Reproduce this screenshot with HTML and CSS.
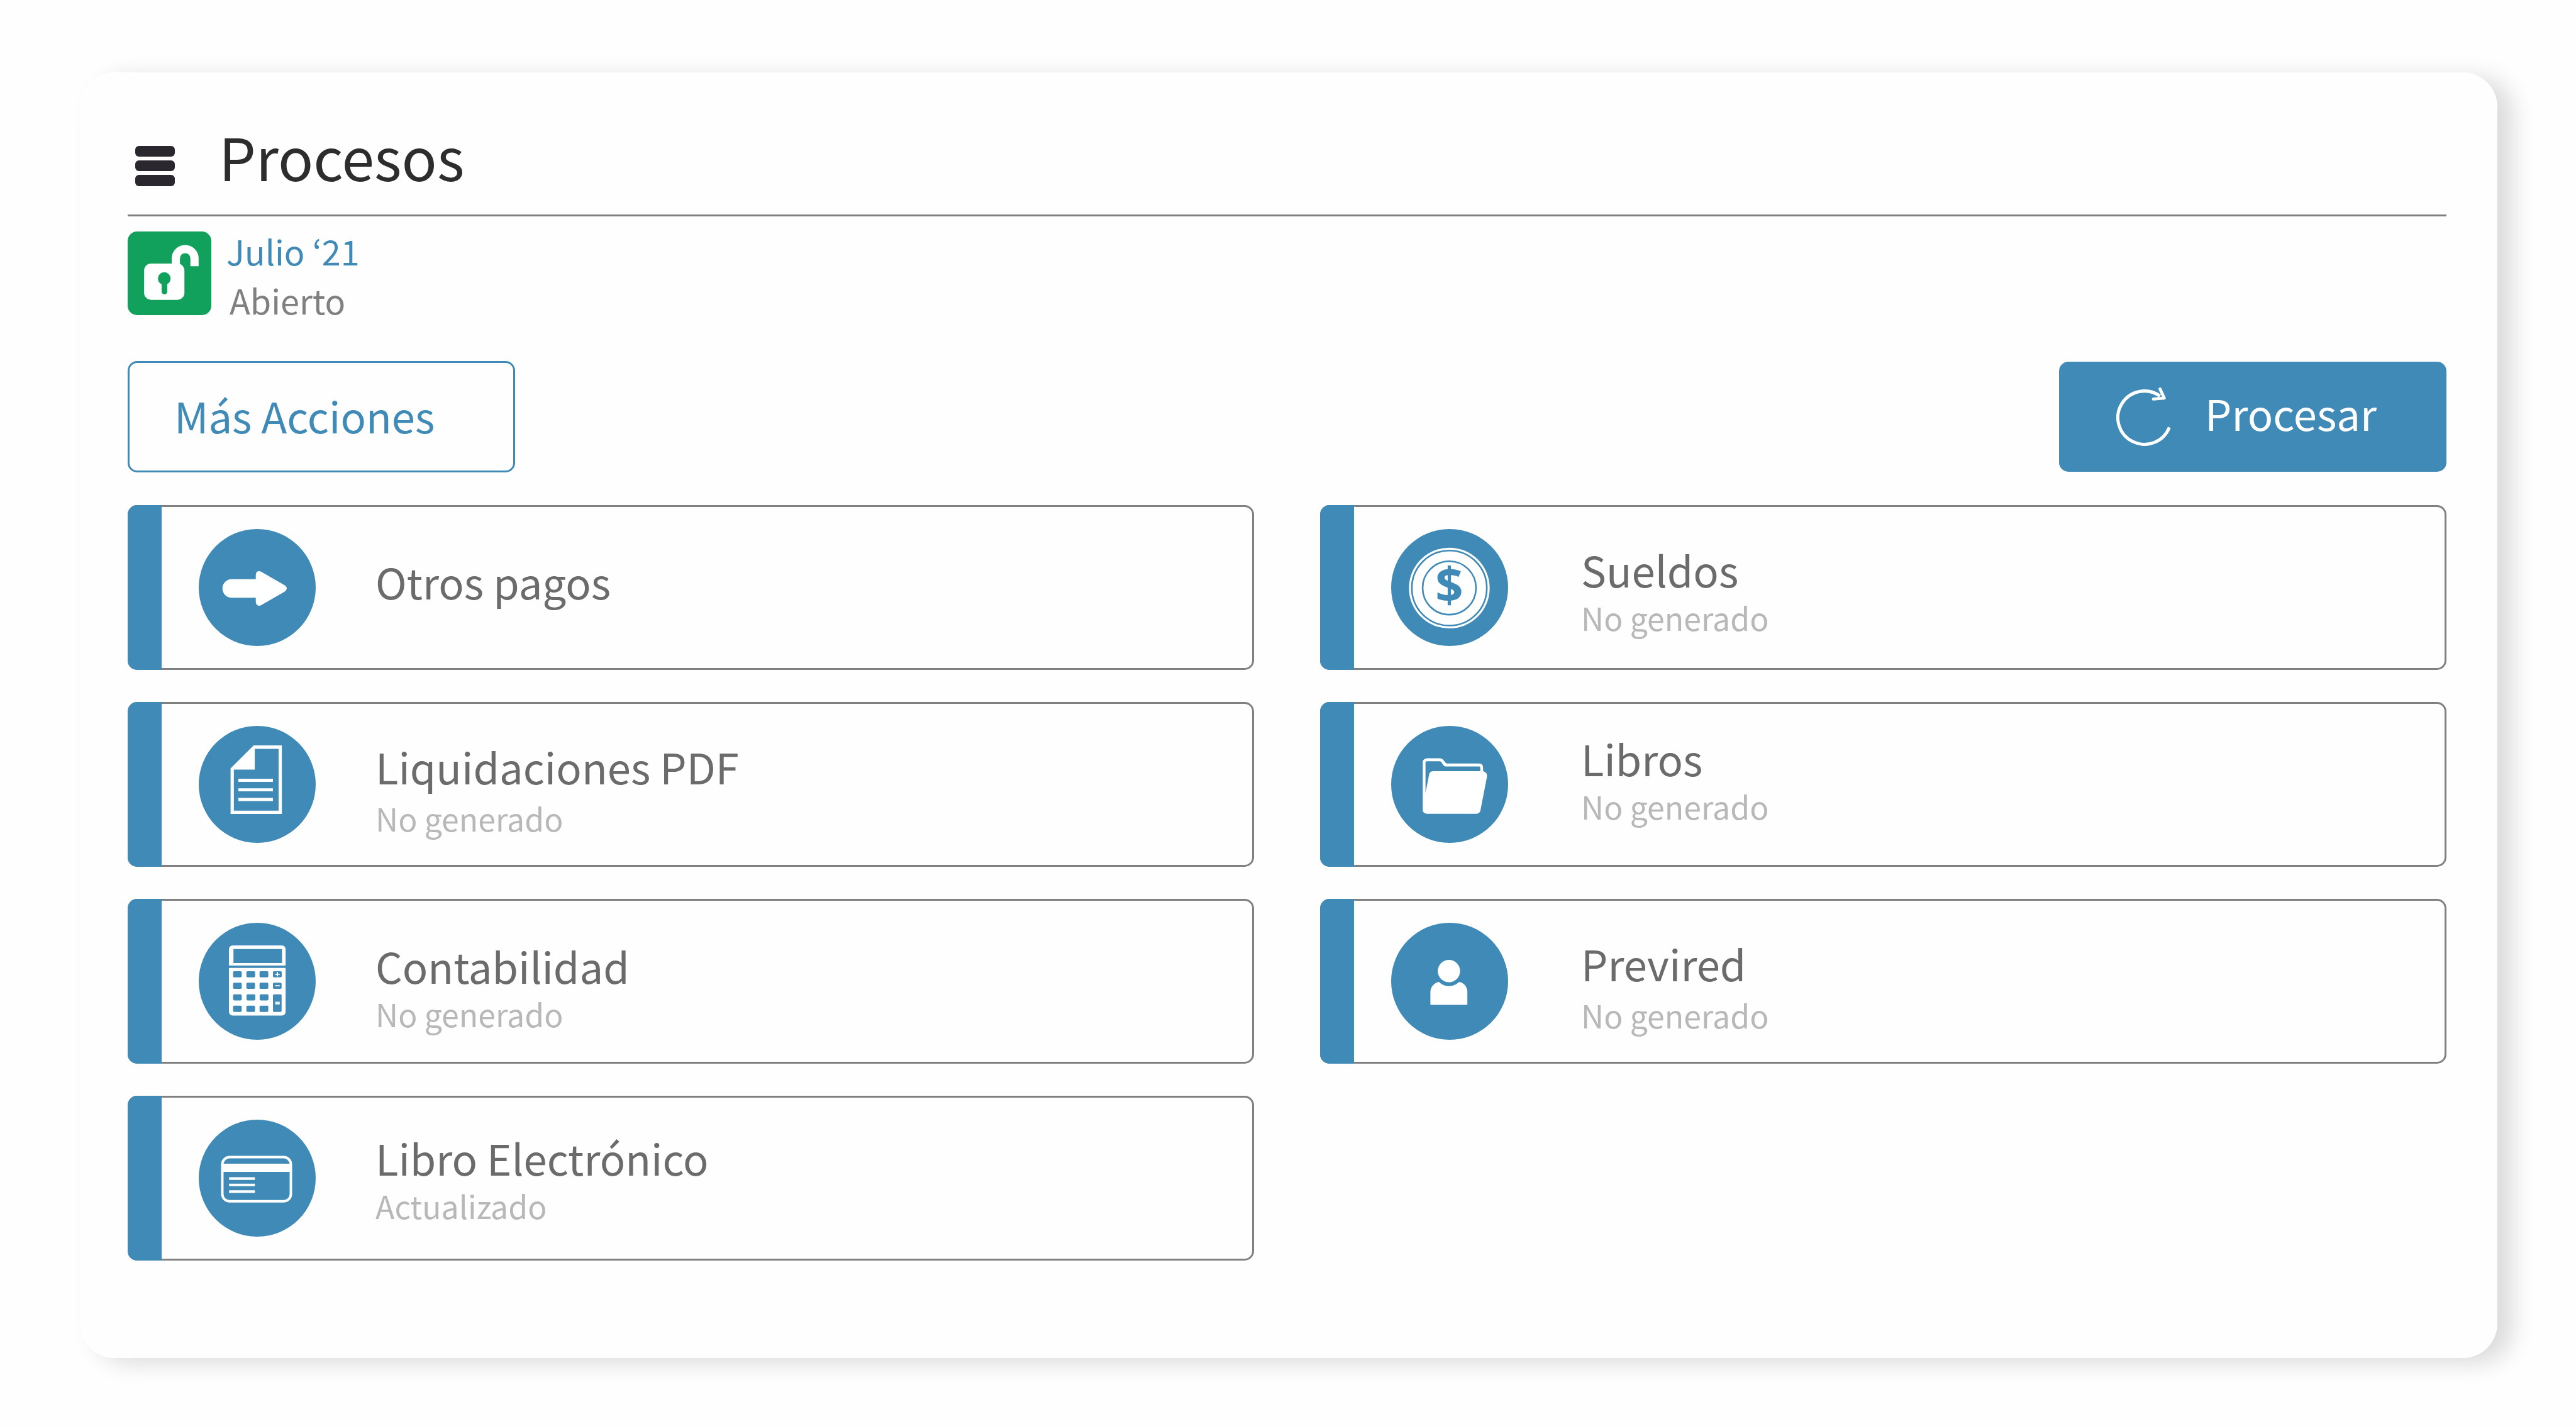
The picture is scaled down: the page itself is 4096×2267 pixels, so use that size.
FILE: index.html
```html
<!DOCTYPE html>
<html lang="es">
<head>
<meta charset="utf-8">
<title>Procesos</title>
<meta name="viewport" content="width=device-width, initial-scale=1">
<link rel="stylesheet" href="styles.css">
</head>
<body>
<main class="panel">
  <header class="panel-header">
    <svg class="menu-icon" viewBox="0 0 63 64" aria-hidden="true">
      <rect width="63" height="17" rx="6"/>
      <rect y="23" width="63" height="17" rx="6"/>
      <rect y="46" width="63" height="18" rx="6"/>
    </svg>
    <h1 class="title">Procesos</h1>
  </header>

  <section class="period">
    <svg class="lock" viewBox="0 0 222 224" aria-hidden="true">
      <path d="M128 100V72a25 25 0 0 1 50 0V93" fill="none" stroke="#fff" stroke-width="22"/>
      <rect x="43" y="86" width="108" height="97" rx="19" fill="#fff"/>
      <circle cx="97" cy="126" r="17" fill="#11a15c"/>
      <path d="M97.500 130V161" stroke="#11a15c" stroke-width="15" stroke-linecap="round"/>
    </svg>
    <div class="period-text">
      <p class="period-name">Julio ‘21</p>
      <p class="period-state">Abierto</p>
    </div>
  </section>

  <div class="actions">
    <button class="button button-outline" type="button">Más Acciones</button>
    <button class="button button-solid" type="button">
      <svg class="refresh" viewBox="0 0 146 157" aria-hidden="true">
        <path d="M142 107A71.500 71.500 0 1 1 117 23" stroke-width="8.500"/>
        <path d="M117 4L128.500 28.500L99 31" stroke-width="8" stroke-linecap="round" stroke-linejoin="round"/>
      </svg>
      <span class="button-label">Procesar</span>
    </button>
  </div>

  <ul class="cards">
    <li class="card">
      <span class="stripe"></span>
      <svg class="icon" viewBox="149 159 933 933" aria-hidden="true">
        <path d="M412 559H604V525Q606 495 630 495Q640 495 650 501L835 608Q851 618 851 633Q851 647 835 658L650 765Q640 771 630 771Q606 769 604 741V707H412A74 74 0 0 1 412 559Z"/>
      </svg>
      <div class="card-text single">
        <h2 class="card-title">Otros pagos</h2>
      </div>
    </li>
    <li class="card">
      <span class="stripe"></span>
      <svg class="icon" viewBox="153 159 933 933" aria-hidden="true">
        <circle cx="617" cy="630" r="322"/>
        <circle class="ring" cx="617" cy="630" r="299"/>
        <circle class="ring" cx="617" cy="629" r="213"/>
        <text class="coin" x="617" y="747">$</text>
      </svg>
      <div class="card-text low">
        <h2 class="card-title">Sueldos</h2>
        <p class="card-state">No generado</p>
      </div>
    </li>
    <li class="card">
      <span class="stripe"></span>
      <svg class="icon" viewBox="149 141 933 933" aria-hidden="true">
        <path fill-rule="evenodd" d="M403 480L587 297H812V843H403ZM429 490V817H786V324H596V490Z"/>
        <path d="M465 562H741V587H465ZM465 639H741V663H465ZM465 715H741V740H465Z"/>
      </svg>
      <div class="card-text low loose">
        <h2 class="card-title">Liquidaciones PDF</h2>
        <p class="card-state">No generado</p>
      </div>
    </li>
    <li class="card">
      <span class="stripe"></span>
      <svg class="icon" viewBox="153 141 933 933" aria-hidden="true">
        <path fill-rule="evenodd" d="M405 424Q413 402 438 399H540Q562 399 575 420Q586 439 596 441H855Q884 442 886 470L887 502Q905 506 917 525V548L866 812Q862 838 836 842H438Q415 840 405 822ZM427 432V675L456 528Q460 503 486 502H864V474Q864 464 855 464H588Q574 462 566 449L556 433Q550 424 540 423H436Q429 423 427 432Z"/>
      </svg>
      <div class="card-text high">
        <h2 class="card-title">Libros</h2>
        <p class="card-state">No generado</p>
      </div>
    </li>
    <li class="card">
      <span class="stripe"></span>
      <svg class="icon" viewBox="149 156 933 933" aria-hidden="true">
        <path fill-rule="evenodd" d="M390 497V366Q392 339 420 336H812Q840 339 842 366V497ZM426 366V477H813V366Z"/>
        <path d="M390 516H842V866Q840 893 812 896H420Q392 893 390 866Z"/>
        <g class="keys">
          <rect x="423" y="542" width="69" height="49" rx="9"/>
          <rect x="529" y="542" width="70" height="49" rx="9"/>
          <rect x="634" y="542" width="70" height="49" rx="9"/>
          <rect x="741" y="542" width="70" height="49" rx="9"/>
          <rect x="423" y="634" width="69" height="49" rx="9"/>
          <rect x="529" y="634" width="69" height="49" rx="9"/>
          <rect x="634" y="634" width="70" height="49" rx="9"/>
          <rect x="741" y="634" width="69" height="49" rx="9"/>
          <rect x="423" y="726" width="69" height="49" rx="9"/>
          <rect x="530" y="726" width="70" height="49" rx="9"/>
          <rect x="635" y="726" width="70" height="49" rx="9"/>
          <rect x="741" y="726" width="69" height="141" rx="9"/>
          <rect x="423" y="817" width="69" height="50" rx="9"/>
          <rect x="529" y="817" width="69" height="50" rx="9"/>
          <rect x="634" y="817" width="70" height="50" rx="9"/>
        </g>
        <path d="M759 562H772V549H781V562H795V571H781V584H772V571H759ZM759 654H795V663H759ZM759 786H795V795H759ZM759 798H795V807H759Z"/>
      </svg>
      <div class="card-text lowest">
        <h2 class="card-title">Contabilidad</h2>
        <p class="card-state">No generado</p>
      </div>
    </li>
    <li class="card">
      <span class="stripe"></span>
      <svg class="icon" viewBox="153 156 933 933" aria-hidden="true">
        <circle cx="614" cy="541" r="89"/>
        <path d="M534 628C495 636 466 668 466 710V806Q466 809 469 810H759Q761 809 761 806V706C761 668 735 636 695 628C672 650 645 661 614 661S556 650 534 628Z"/>
      </svg>
      <div class="card-text low loose">
        <h2 class="card-title">Previred</h2>
        <p class="card-state">No generado</p>
      </div>
    </li>
    <li class="card">
      <span class="stripe"></span>
      <svg class="icon" viewBox="149 141 933 933" aria-hidden="true">
        <rect x="337" y="440" width="547" height="352" rx="58" fill="none" stroke="#fff" stroke-width="20"/>
        <path d="M337 492H884V557H337ZM391 600H597V621H391ZM391 651H597V672H391ZM391 704H597V725H391Z"/>
      </svg>
      <div class="card-text">
        <h2 class="card-title">Libro Electrónico</h2>
        <p class="card-state">Actualizado</p>
      </div>
    </li>
  </ul>
</main>
</body>
</html>
```
FILE: styles.css
```css
* {
  box-sizing: border-box;
}

body {
  margin: 0;
  padding: 115px 125px 107px 127px;
  background: #fefefe;
  font-family: "Noto Sans CJK KR", "Noto Sans", sans-serif;
}

h1, h2, p, ul {
  margin: 0;
  padding: 0;
  font-weight: 400;
}

.panel {
  padding: 83px 81px 155px 76px;
  border-radius: 55px;
  background: #fefefe;
  box-shadow: 24px 8px 36px rgba(0, 0, 0, 0.14);
}

/* Heading */
.panel-header {
  display: flex;
  align-items: flex-end;
  gap: 70px;
  padding: 0 12px 43px;
  border-bottom: 3px solid #808080;
}

.menu-icon {
  width: 63px;
  height: 64px;
  margin-bottom: 2px;
  fill: #2a272f;
}

.title {
  font-size: 93px;
  line-height: 100px;
  color: #2d2d2d;
}

/* Current period */
.period {
  display: flex;
  align-items: flex-start;
  gap: 24px;
  margin-top: 16px;
}

.lock {
  width: 133px;
  height: 133px;
  margin-top: 8px;
  border-radius: 15px;
  background: #11a15c;
}

.period-text {
  font-size: 54px;
  line-height: 78px;
}

.period-name {
  color: #3f8ab7;
}

.period-state {
  padding-left: 5px;
  color: #808080;
}

/* Actions */
.actions {
  display: flex;
  align-items: center;
  justify-content: space-between;
  margin-top: 58px;
}

.button {
  display: flex;
  align-items: center;
  min-width: 616px;
  border-radius: 15px;
  font: inherit;
  font-size: 67px;
  line-height: 84px;
  cursor: pointer;
}

.button-outline {
  height: 177px;
  padding: 0 71px 5px;
  border: 3px solid #3f8ab7;
  background: transparent;
  color: #3f8ab7;
}

.button-solid {
  gap: 54px;
  height: 175px;
  padding: 0 91px;
  border: 0;
  background: #3f8ab7;
  color: #fefefe;
}

.button-label {
  padding-bottom: 13px;
}

.refresh {
  width: 87px;
  height: 93px;
  fill: none;
  stroke: #fff;
}

/* Process cards */
.cards {
  display: grid;
  grid-template-columns: 1fr 1fr;
  gap: 51px 105px;
  margin-top: 52px;
  list-style: none;
}

.card {
  display: flex;
  align-items: center;
  height: 262px;
  border: 3px solid #808080;
  border-radius: 15px;
}

.stripe {
  flex: none;
  align-self: stretch;
  width: 54px;
  margin: -3px 59px -3px -3px;
  border-radius: 15px 0 0 15px;
  background: #3f8ab7;
}

.icon {
  flex: none;
  width: 186px;
  height: 186px;
  border-radius: 50%;
  background: #3f8ab7;
  fill: #fff;
}

.ring {
  fill: none;
  stroke: #3f8ab7;
  stroke-width: 13px;
}

.coin {
  fill: #3f8ab7;
  font-family: "Open Sans", sans-serif;
  font-size: 390px;
  font-weight: 700;
  text-anchor: middle;
}

.keys {
  fill: #3f8ab7;
}

.card-text {
  align-self: flex-start;
  display: flex;
  flex-direction: column;
  margin-left: 95px;
  padding-top: 53px;
}

.card:nth-child(even) .card-text {
  margin-left: 116px;
}

.card-text.single {
  padding-top: 76px;
}

.card-text.high {
  padding-top: 44px;
}

.card-text.low {
  padding-top: 57px;
}

.card-text.lowest {
  padding-top: 61px;
}

.card-text.loose {
  gap: 6px;
}

.card-title {
  font-size: 67px;
  line-height: 84px;
  color: #6b6b6b;
}

.card-state {
  font-size: 50px;
  line-height: 68px;
  color: #b8b8b8;
}
```
